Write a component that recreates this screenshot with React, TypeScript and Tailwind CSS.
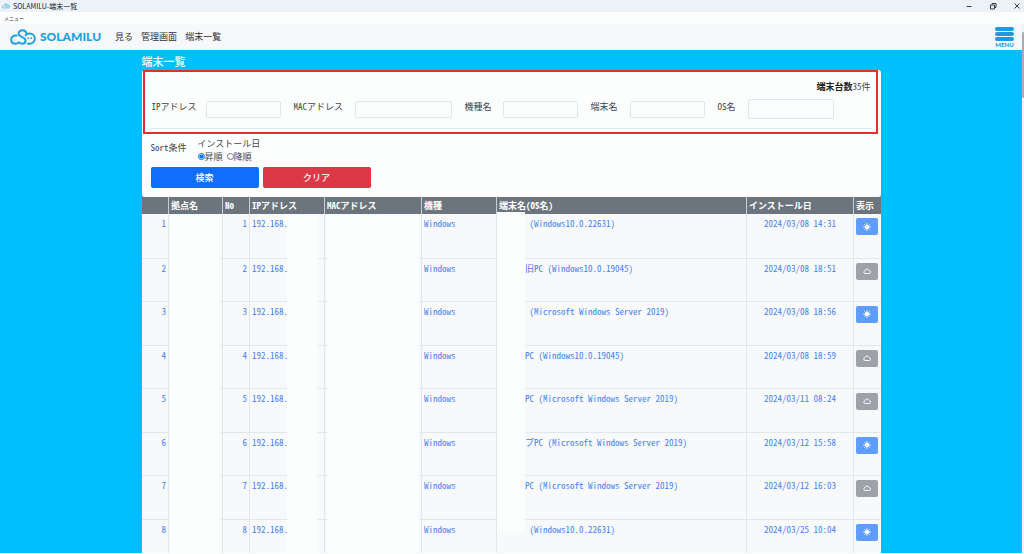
import type { ReactNode } from "react";

type Device = {
  no: number;
  name: string;
  installed: string;
  online: boolean;
};

const devices: Device[] = [
  { no: 1, name: " (Windows10.0.22631)", installed: "2024/03/08 14:31", online: true },
  { no: 2, name: "旧PC (Windows10.0.19045)", installed: "2024/03/08 18:51", online: false },
  { no: 3, name: " (Microsoft Windows Server 2019)", installed: "2024/03/08 18:56", online: true },
  { no: 4, name: "PC (Windows10.0.19045)", installed: "2024/03/08 18:59", online: false },
  { no: 5, name: "PC (Microsoft Windows Server 2019)", installed: "2024/03/11 08:24", online: false },
  { no: 6, name: "プPC (Microsoft Windows Server 2019)", installed: "2024/03/12 15:58", online: true },
  { no: 7, name: "PC (Microsoft Windows Server 2019)", installed: "2024/03/12 16:03", online: false },
  { no: 8, name: " (Windows10.0.22631)", installed: "2024/03/25 10:04", online: true },
];

const columns = [
  { label: "", width: "w-[27px]" },
  { label: "拠点名", width: "w-[54px]" },
  { label: "No", width: "w-[27px]" },
  { label: "IPアドレス", width: "w-[75px]" },
  { label: "MACアドレス", width: "w-[97px]" },
  { label: "機種", width: "w-[75px]" },
  { label: "端末名(OS名)", width: "" },
  { label: "インストール日", width: "w-[107px]" },
  { label: "表示", width: "w-[27px]" },
];

const fields = [
  { id: "ip", label: "IPアドレス", labelWidth: "w-[55px]", inputWidth: "w-[75px]" },
  { id: "mac", label: "MACアドレス", labelWidth: "w-[62px]", inputWidth: "w-[97px]" },
  { id: "model", label: "機種名", labelWidth: "w-[39px]", inputWidth: "w-[75px]" },
  { id: "device", label: "端末名", labelWidth: "w-[40px]", inputWidth: "w-[75px]" },
];

function CloudLogo({ className }: { className: string }) {
  return (
    <svg viewBox="0 0 26 16" className={className} fill="none" stroke="#1e9fe0" strokeWidth="2" strokeLinecap="round">
      <path d="M6.6 6.6C3.4 6.2 1.2 8 1.2 10.8C1.2 13.4 3.2 14.8 5.6 14.8C7 14.8 8 14.2 8.8 13.4C10 14.6 11 14.8 12.2 14.8C14.2 14.8 15.6 13.4 15.6 11.4C15.6 8 8.6 8.4 8.6 4.8C8.6 2.6 10.2 1.2 12.4 1.2C14.4 1.2 15.8 2.2 16.4 4" />
      <path d="M15.6 6.2C16.6 4.9 17.8 4.4 19.4 4.4C22.6 4.4 24.8 6.6 24.8 9.6C24.8 12.6 22.6 14.8 19.4 14.8H18" />
      <path d="M18.2 9.2h.1M21.2 9.2h.1" strokeWidth="1.7" />
    </svg>
  );
}

function SunIcon() {
  return (
    <svg viewBox="0 0 16 16" className="size-2" fill="#fff" stroke="#fff" strokeWidth="1.6" strokeLinecap="round">
      <circle cx="8" cy="8" r="3.8" />
      <path d="M8 1v2M8 13v2M1 8h2M13 8h2M3 3l1.4 1.4M11.6 11.6L13 13M13 3l-1.4 1.4M4.4 11.6L3 13" />
    </svg>
  );
}

function CloudIcon() {
  return (
    <svg viewBox="0 0 16 16" className="size-2" fill="none" stroke="#fff" strokeWidth="1.8">
      <path d="M4 13h8.4a2.7 2.7 0 0 0 .3-5.4A4.7 4.7 0 0 0 3.6 7.4 2.9 2.9 0 0 0 4 13z" />
    </svg>
  );
}

function WindowButton({ label, children }: { label: string; children: ReactNode }) {
  return (
    <button type="button" aria-label={label} className="flex w-6 items-center justify-end pr-[3px]">
      <svg viewBox="0 0 8 8" className="size-2" fill="none" stroke="#3b3b3b" strokeWidth="1">
        {children}
      </svg>
    </button>
  );
}

function TitleBar() {
  return (
    <div className="flex h-3 shrink-0 items-center bg-[#ebf3f8] pl-0.5 text-[7px] text-[#222]">
      <CloudLogo className="h-1.5 w-2" />
      <span className="ml-[3px]">SOLAMILU-端末一覧</span>
      <div className="ml-auto flex">
        <WindowButton label="最小化">
          <path d="M1.5 4.5h5" />
        </WindowButton>
        <WindowButton label="元に戻す">
          <path d="M1.5 3h4v4h-4zM3 2.5v-1h4v4H6" />
        </WindowButton>
        <WindowButton label="閉じる">
          <path d="M1.5 1.5l5 5M6.5 1.5l-5 5" />
        </WindowButton>
      </div>
    </div>
  );
}

function Header() {
  return (
    <header className="flex h-[26px] shrink-0 items-center bg-[#f7f8fb] pr-2 pl-2.5">
      <a href="#" className="flex items-center gap-1">
        <CloudLogo className="h-4 w-[26px]" />
        <span className="font-['Lato'] text-[12px] font-black text-[#1e9fe0]">SOLAMILU</span>
      </a>
      <nav className="ml-3.5 flex gap-2 text-[9px] text-[#333]">
        <a href="#">見る</a>
        <a href="#">管理画面</a>
        <a href="#">端末一覧</a>
      </nav>
      <button type="button" className="ml-auto flex flex-col items-center gap-px text-[#1a9be0]">
        <span className="h-1 w-[19px] rounded-full bg-[#1a9be0]" />
        <span className="h-1 w-[19px] rounded-full bg-[#1a9be0]" />
        <span className="h-1 w-[19px] rounded-full bg-[#1a9be0]" />
        <span className="font-['Lato'] text-[6px] leading-[5px] font-black">MENU</span>
      </button>
    </header>
  );
}

function SearchPanel() {
  return (
    <form className="relative rounded-[3px] bg-[#fcfdfd] px-[9px] pt-2.5 pb-[9px] text-[#45454d]">
      <div className="pointer-events-none absolute top-0 right-[3px] left-px h-16 border-2 border-[#e62e2e]" />

      <p className="pr-px text-right leading-[14px]">
        <b className="text-[#222]">端末台数</b>35件
      </p>

      <div className="mt-1 flex h-[22px] items-center gap-3">
        {fields.map((field) => (
          <div key={field.id} className="flex items-center">
            <label htmlFor={field.id} className={`${field.labelWidth} pb-1 pl-px whitespace-nowrap`}>
              {field.label}
            </label>
            <input
              id={field.id}
              type="text"
              className={`${field.inputWidth} h-[17px] rounded-[2px] border border-[#e3e6e8] bg-transparent px-1`}
            />
          </div>
        ))}
        <div className="flex items-center">
          <label htmlFor="os" className="w-[31px] pb-1 pl-px whitespace-nowrap">
            OS名
          </label>
          <select
            id="os"
            className="h-5 w-[86px] appearance-none rounded-[2px] border border-[#e3e6e8] bg-transparent px-1"
          />
        </div>
      </div>

      <hr className="mt-2 border-[#e3e5e6]" />

      <fieldset className="mt-2 flex items-center">
        <span className="w-[47px] pb-1">Sort条件</span>
        <div className="leading-[13px]">
          <p>インストール日</p>
          <div className="flex gap-1">
            <label className="flex items-center">
              <input type="radio" name="order" defaultChecked className="size-[7px]" />
              昇順
            </label>
            <label className="flex items-center">
              <input type="radio" name="order" className="size-[7px]" />
              降順
            </label>
          </div>
        </div>
      </fieldset>

      <div className="mt-1 flex gap-1 text-white">
        <button type="submit" className="h-[21px] w-[108px] rounded-[2px] bg-[#126dfd] font-medium">
          検索
        </button>
        <button type="reset" className="h-[21px] w-[108px] rounded-[2px] bg-[#dc3845] font-medium">
          クリア
        </button>
      </div>
    </form>
  );
}

function DeviceTable() {
  return (
    <div className="relative">
      <table className="w-full table-fixed border-collapse bg-[#f8f9fb] text-[#4480fa]">
        <thead>
          <tr className="h-[17px] bg-[#6c757d] text-left text-white">
            {columns.map((column) => (
              <th
                key={column.label}
                className={`${column.width} border-r border-[#c9cdd1] px-0.5 py-0 leading-4 font-bold whitespace-nowrap last:border-r-0`}
              >
                {column.label}
              </th>
            ))}
          </tr>
        </thead>
        <tbody>
          {devices.map((device) => (
            <tr
              key={device.no}
              className="h-[43px] border-b border-[#e3e6ea] align-top leading-3 whitespace-pre odd:h-[44px] *:border-r *:border-[#e3e6ea] *:px-0.5 *:pt-1 *:last:border-r-0"
            >
              <td className="text-right">{device.no}</td>
              <td />
              <td className="text-right">{device.no}</td>
              <td>192.168.</td>
              <td />
              <td>Windows</td>
              <td>
                <span className="pl-[26px]">{device.name}</span>
              </td>
              <td className="text-center">{device.installed}</td>
              <td>
                <button
                  type="button"
                  aria-label={device.online ? "オンライン" : "オフライン"}
                  className={`flex h-[17px] w-[22px] items-center justify-center rounded-[2px] ${
                    device.online ? "bg-[#5f9dfd]" : "bg-[#9ca2a7]"
                  }`}
                >
                  {device.online ? <SunIcon /> : <CloudIcon />}
                </button>
              </td>
            </tr>
          ))}
        </tbody>
      </table>

      {/* masked values */}
      <div className="absolute top-[18px] bottom-0 left-7 w-[50px] bg-[#fcfdfd]" />
      <div className="absolute top-[18px] bottom-0 left-[145px] w-[31px] bg-[#fcfdfd]" />
      <div className="absolute top-[18px] bottom-0 left-[185px] w-[92px] bg-[#fcfdfd]" />
      <div className="absolute top-[15px] bottom-[30px] left-[355px] w-7 bg-[#fcfdfd]" />
    </div>
  );
}

export default function App() {
  return (
    <div className="flex h-screen flex-col overflow-hidden bg-[#fcfdfd] pb-px font-['Noto_Sans_CJK_JP',sans-serif] text-[9px]">
      <TitleBar />
      <div className="flex h-3 shrink-0 items-center pl-1 text-[5px] text-[#333]">
        <button type="button">メニュー</button>
      </div>
      <div className="flex min-h-0 flex-1">
        <div className="flex min-w-0 flex-1 flex-col">
          <Header />
          <main className="min-h-0 flex-1 overflow-hidden bg-[#00bfff]">
            <div className="mx-auto w-full max-w-[739px] [font-feature-settings:'hwid']">
              <h1 className="pt-0.5 text-[11px] leading-[18px] font-medium text-white">端末一覧</h1>
              <SearchPanel />
              <DeviceTable />
            </div>
          </main>
        </div>
        <div className="w-0.5 bg-[#f0f2f4] pt-2">
          <div className="h-[66px] rounded-full bg-[#a9adb0]" />
        </div>
      </div>
    </div>
  );
}
